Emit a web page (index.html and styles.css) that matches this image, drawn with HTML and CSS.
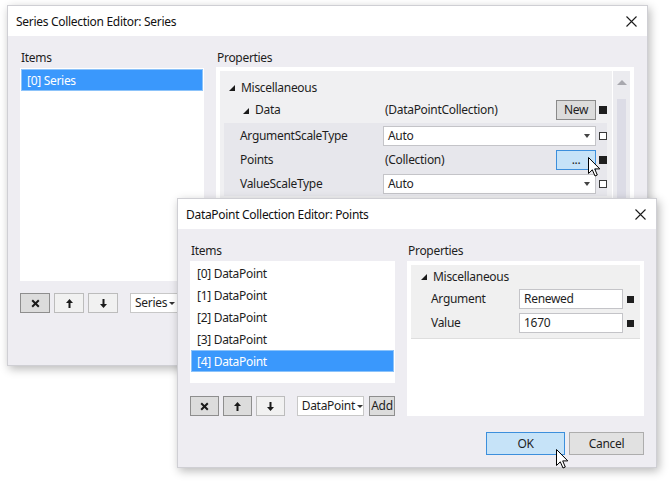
FILE: index.html
```html
<!DOCTYPE html>
<html>
<head>
<meta charset="utf-8">
<link rel="stylesheet" href="styles.css">
</head>
<body>
<div class="desk">

  <section class="win win1">
    <div class="titlebar">
      <span class="title">Series Collection Editor: Series</span>
      <svg class="close" width="11" height="11" viewBox="0 0 11 11"><path d="M0.5 0.5L10.5 10.5M10.5 0.5L0.5 10.5" stroke="#1a1a1a" stroke-width="1.1"/></svg>
    </div>
    <div class="wbody body1">
      <div class="col items1">
        <div class="lbl">Items</div>
        <div class="list list1">
          <div class="item sel">[0] Series</div>
        </div>
        <div class="tools">
          <div class="tb dark"><svg width="9" height="9" viewBox="0 0 9 9"><path d="M1.2 1.2L7.8 7.8M7.8 1.2L1.2 7.8" stroke="#1a1a1a" stroke-width="2"/></svg></div>
          <div class="tb"><svg width="7" height="9" viewBox="0 0 7 9"><polygon points="3.5,0 7,4 4.5,4 4.5,9 2.5,9 2.5,4 0,4" fill="#1a1a1a"/></svg></div>
          <div class="tb"><svg width="7" height="9" viewBox="0 0 7 9"><polygon points="3.5,9 7,5 4.5,5 4.5,0 2.5,0 2.5,5 0,5" fill="#1a1a1a"/></svg></div>
          <div class="combo combo1">Series<i class="caret"></i></div>
        </div>
      </div>
      <div class="col props1">
        <div class="lbl">Properties</div>
        <div class="pbox pbox1">
          <div class="grid1">
            <div class="prow cat"><i class="tri"></i>Miscellaneous</div>
            <div class="prow datarow">
              <div class="pname sub"><i class="tri"></i>Data</div>
              <div class="pval split"><span class="vtext">(DataPointCollection)</span><span class="btn newbtn">New</span></div>
              <div class="mark"><i class="sq filled"></i></div>
            </div>
            <div class="band">
              <div class="prow">
                <div class="pname">ArgumentScaleType</div>
                <div class="pval"><div class="dd">Auto<i class="caret"></i></div></div>
                <div class="mark"><i class="sq"></i></div>
              </div>
              <div class="prow">
                <div class="pname">Points</div>
                <div class="pval split"><span class="vtext">(Collection)</span><span class="btn dots">...</span></div>
                <div class="mark"><i class="sq filled"></i></div>
              </div>
              <div class="prow">
                <div class="pname">ValueScaleType</div>
                <div class="pval"><div class="dd">Auto<i class="caret"></i></div></div>
                <div class="mark"><i class="sq"></i></div>
              </div>
            </div>
          </div>
          <div class="scroll">
            <i class="sup"></i>
            <div class="thumb"></div>
          </div>
        </div>
      </div>
    </div>
  </section>

  <section class="win win2">
    <div class="titlebar">
      <span class="title">DataPoint Collection Editor: Points</span>
      <svg class="close" width="11" height="11" viewBox="0 0 11 11"><path d="M0.5 0.5L10.5 10.5M10.5 0.5L0.5 10.5" stroke="#1a1a1a" stroke-width="1.1"/></svg>
    </div>
    <div class="wbody body2">
      <div class="cols2">
        <div class="col items2">
          <div class="lbl">Items</div>
          <div class="list list2">
            <div class="item">[0] DataPoint</div>
            <div class="item">[1] DataPoint</div>
            <div class="item">[2] DataPoint</div>
            <div class="item">[3] DataPoint</div>
            <div class="item sel">[4] DataPoint</div>
          </div>
          <div class="tools tools2">
            <div class="tb dark"><svg width="9" height="9" viewBox="0 0 9 9"><path d="M1.2 1.2L7.8 7.8M7.8 1.2L1.2 7.8" stroke="#1a1a1a" stroke-width="2"/></svg></div>
            <div class="tb dark"><svg width="7" height="9" viewBox="0 0 7 9"><polygon points="3.5,0 7,4 4.5,4 4.5,9 2.5,9 2.5,4 0,4" fill="#1a1a1a"/></svg></div>
            <div class="tb"><svg width="7" height="9" viewBox="0 0 7 9"><polygon points="3.5,9 7,5 4.5,5 4.5,0 2.5,0 2.5,5 0,5" fill="#1a1a1a"/></svg></div>
            <div class="combo combo2">DataPoint<i class="caret"></i></div>
            <div class="tb dark addbtn">Add</div>
          </div>
        </div>
        <div class="col props2">
          <div class="lbl">Properties</div>
          <div class="pbox pbox2">
            <div class="grid2">
              <div class="prow cat2"><i class="tri"></i>Miscellaneous</div>
              <div class="prow">
                <div class="pname2">Argument</div>
                <div class="inp">Renewed</div>
                <i class="sq filled sq2"></i>
              </div>
              <div class="prow">
                <div class="pname2">Value</div>
                <div class="inp">1670</div>
                <i class="sq filled sq2"></i>
              </div>
            </div>
          </div>
        </div>
      </div>
      <div class="footer">
        <div class="fbtn ok">OK</div>
        <div class="fbtn cancel">Cancel</div>
      </div>
    </div>
  </section>

  <svg class="cursor cur1" width="13" height="20" viewBox="0 0 13 20"><path d="M0.5 0.5L0.5 16.5L4.3 12.8L7 19L9.3 18L6.7 11.9L11.8 11.9Z" fill="#fff" stroke="#000" stroke-width="1" stroke-linejoin="miter"/></svg>
  <svg class="cursor cur2" width="13" height="20" viewBox="0 0 13 20"><path d="M0.5 0.5L0.5 16.5L4.3 12.8L7 19L9.3 18L6.7 11.9L11.8 11.9Z" fill="#fff" stroke="#000" stroke-width="1" stroke-linejoin="miter"/></svg>
</div>
</body>
</html>
```

FILE: styles.css
```css
* { box-sizing: border-box; }

body {
  margin: 0;
  background: #ffffff;
  font-family: "Noto Sans", "Open Sans", sans-serif;
  font-size: 12px;
  line-height: 16px;
  letter-spacing: -0.3px;
  color: #1e1e1e;
}

.desk {
  position: relative;
  width: 669px;
  height: 482px;
  overflow: hidden;
}

.win {
  position: absolute;
  display: flex;
  flex-direction: column;
  background: #eeedf2;
  border: 1px solid #cfcfd4;
  box-shadow: 2px 3px 9px rgba(0, 0, 0, 0.28);
}

.win1 { left: 7px; top: 5px; width: 641px; height: 361px; }
.win2 { left: 177px; top: 198px; width: 480px; height: 270px; }

.titlebar {
  height: 30px;
  flex: none;
  background: #ffffff;
  display: flex;
  align-items: center;
  justify-content: space-between;
  padding: 1px 10px 0 8px;
}
.title { color: #111; }
.close { display: block; }

.wbody { flex: 1; }
.body1 {
  display: flex;
  gap: 12px;
  padding: 13px 13px 0 12px;
}
.body2 { padding: 13px 12px 0 12px; }
.cols2 { display: flex; gap: 12px; }

.col { display: flex; flex-direction: column; }
.items1 { width: 184px; }
.props1 { width: 418px; }
.items2 { width: 205px; }
.props2 { width: 237px; }

.lbl {
  height: 16px;
  line-height: 18px;
  margin-bottom: 3px;
  padding-left: 1px;
}

.list {
  background: #ffffff;
  padding: 1px;
}
.list1 { height: 213px; }
.list2 { height: 122px; }

.item {
  height: 22px;
  line-height: 24px;
  padding-left: 6px;
}
.item.sel {
  background: #3a98fc;
  color: #ffffff;
  box-shadow: inset 0 0 0 1px #8cc3fa;
}

.tools {
  display: flex;
  gap: 4px;
  margin-top: 12px;
  height: 20px;
}
.tools2 { margin-top: 13px; }

.tb {
  width: 30px;
  height: 20px;
  border: 1px solid #bcbcbc;
  background: #f1f1f1;
  display: flex;
  align-items: center;
  justify-content: center;
}
.tb.dark {
  background: #dcdcdc;
  border-color: #8e8e8e;
}
.tb svg { display: block; }

.combo {
  margin-left: 8px;
  height: 20px;
  background: #ffffff;
  border: 1px solid #c8c8c8;
  display: flex;
  align-items: center;
  padding-left: 4px;
  gap: 2px;
}
.combo1 { width: 48px; }
.combo2 { width: 68px; }
.addbtn { width: 27px; margin-left: 1px; }

.caret {
  display: inline-block;
  width: 0;
  height: 0;
  border-left: 3px solid transparent;
  border-right: 3px solid transparent;
  border-top: 3px solid #333;
}

/* property grid 1 */
.pbox { background: #ffffff; padding: 4px; }
.pbox1 {
  display: flex;
  gap: 1px;
  height: 214px;
  margin-top: -1px;
}
.grid1 {
  width: 392px;
  background: #f0f0f2;
  padding-top: 5px;
}
.prow {
  display: flex;
  align-items: center;
  height: 24px;
}
.prow.cat { height: 22px; padding-left: 9px; padding-top: 1px; }
.tri {
  display: inline-block;
  width: 0;
  height: 0;
  border-left: 6px solid transparent;
  border-bottom: 6px solid #1a1a1a;
  margin-right: 6px;
}
.pname { width: 159px; padding-left: 16px; }
.pname.sub { width: 163px; padding-left: 23px; }
.pval { width: 213px; }
.pval.split {
  display: flex;
  justify-content: space-between;
  align-items: center;
}
.vtext { padding-left: 2px; }
.mark {
  width: 11px;
  display: flex;
  align-items: center;
  padding-left: 3px;
}
.sq {
  display: block;
  width: 8px;
  height: 8px;
  border: 1px solid #3a3a3a;
  background: #ffffff;
}
.sq.filled { background: #1e1e1e; border-color: #1e1e1e; }

.band {
  margin-top: 1px;
  margin-left: 4px;
  width: 383px;
  padding-top: 1px;
  background: #e7e7ec;
}

.btn {
  width: 40px;
  height: 20px;
  display: flex;
  align-items: center;
  justify-content: center;
}
.newbtn {
  background: #dcdcdc;
  border: 1px solid #8a8a8a;
}
.dots {
  background: #c6e3f8;
  border: 1px solid #3c8fdc;
  line-height: 10px;
}

.dd {
  height: 20px;
  background: #ffffff;
  border: 1px solid #c4c4c8;
  display: flex;
  align-items: center;
  justify-content: space-between;
  padding: 0 5px 0 4px;
}
.dd .caret { border-top-color: #444; border-left-width: 3.5px; border-right-width: 3.5px; border-top-width: 4px; }

.scroll {
  width: 17px;
  background: #ebebef;
  display: flex;
  flex-direction: column;
  align-items: center;
}
.sup {
  display: block;
  width: 0;
  height: 0;
  margin-top: 9px;
  border-left: 5px solid transparent;
  border-right: 5px solid transparent;
  border-bottom: 5px solid #a8a8ae;
}
.thumb {
  margin-top: 14px;
  width: 9px;
  flex: 1;
  background: #dcdce6;
}

/* property grid 2 */
.pbox2 { height: 155px; }
.grid2 {
  background: #f0f0f0;
  padding-bottom: 3px;
  border-bottom: 1px solid #dedede;
}
.prow.cat2 { height: 22px; padding-left: 10px; padding-top: 1px; }
.pname2 { width: 108px; padding-left: 20px; }
.inp {
  width: 104px;
  height: 20px;
  background: #ffffff;
  border: 1px solid #c4c4c8;
  padding-left: 4px;
  display: flex;
  align-items: center;
}
.sq2 { margin-left: 4px; width: 7px; height: 7px; }

.footer {
  display: flex;
  justify-content: flex-end;
  gap: 4px;
  margin-top: 16px;
}
.fbtn {
  height: 23px;
  display: flex;
  align-items: center;
  justify-content: center;
}
.ok {
  width: 79px;
  background: #c6e3f8;
  border: 1px solid #3c8fdc;
}
.cancel {
  width: 75px;
  background: #e1e1e1;
  border: 1px solid #adadad;
}

.cursor { position: absolute; display: block; }
.cur1 { left: 588px; top: 157px; }
.cur2 { left: 556px; top: 449px; }
```
